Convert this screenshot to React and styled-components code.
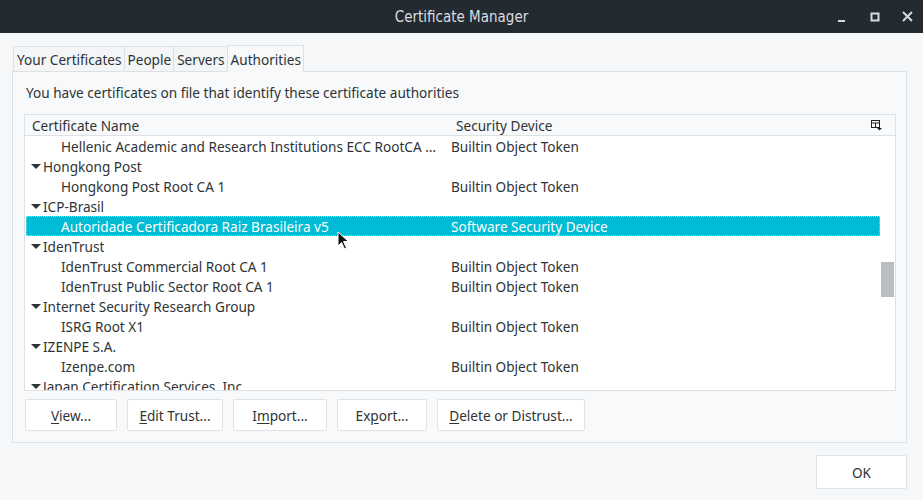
import { createGlobalStyle, styled } from "styled-components";

const Global = createGlobalStyle`
  html, body {
    margin: 0;
    padding: 0;
    width: 923px;
    height: 500px;
    overflow: hidden;
    background: #f5f7f9;
  }
  * { box-sizing: border-box; }
`;

const rows = [
  { child: true, name: "Hellenic Academic and Research Institutions ECC RootCA 2015", device: "Builtin Object Token" },
  { name: "Hongkong Post" },
  { child: true, name: "Hongkong Post Root CA 1", device: "Builtin Object Token" },
  { name: "ICP-Brasil" },
  { child: true, name: "Autoridade Certificadora Raiz Brasileira v5", device: "Software Security Device", selected: true },
  { name: "IdenTrust" },
  { child: true, name: "IdenTrust Commercial Root CA 1", device: "Builtin Object Token" },
  { child: true, name: "IdenTrust Public Sector Root CA 1", device: "Builtin Object Token" },
  { name: "Internet Security Research Group" },
  { child: true, name: "ISRG Root X1", device: "Builtin Object Token" },
  { name: "IZENPE S.A." },
  { child: true, name: "Izenpe.com", device: "Builtin Object Token" },
  { name: "Japan Certification Services, Inc." },
];

const tabs = ["Your Certificates", "People", "Servers", "Authorities"];

export default function App() {
  return (
    <>
      <Global />
      <Window>
        <TitleBar>
          <Title>Certificate Manager</Title>
          <Controls>
            <Ctl>
              <svg width="10" height="10" viewBox="0 0 10 10">
                <rect x="1" y="8" width="7" height="2" fill="#d6dadd" />
              </svg>
            </Ctl>
            <Ctl>
              <svg width="10" height="10" viewBox="0 0 10 10">
                <rect x="1.5" y="1.5" width="7" height="7" fill="none" stroke="#d6dadd" strokeWidth="2" />
              </svg>
            </Ctl>
            <Ctl>
              <svg width="11" height="11" viewBox="0 0 11 11">
                <path d="M1 1 L10 10 M10 1 L1 10" stroke="#d6dadd" strokeWidth="2" />
              </svg>
            </Ctl>
          </Controls>
        </TitleBar>
        <Body>
          <TabRow>
            {tabs.map((t) => (
              <Tab key={t} $active={t === "Authorities"}>
                {t}
              </Tab>
            ))}
          </TabRow>
          <Panel>
            <Intro>You have certificates on file that identify these certificate authorities</Intro>
            <Tree>
              <Header>
                <HeadCell>Certificate Name</HeadCell>
                <HeadCell>Security Device</HeadCell>
                <Picker>
                  <svg width="11" height="11" viewBox="0 0 11 11">
                    <rect x="0.5" y="0.5" width="8" height="7" fill="none" stroke="#222" />
                    <path d="M0.5 3 H8.5 M4.5 3 V7.5" stroke="#222" />
                    <path d="M6 8 H11 L8.5 10.5 Z" fill="#222" />
                  </svg>
                </Picker>
              </Header>
              <TreeBody>
                <RowList>
                  {rows.map((r) => (
                    <Row key={r.name} $selected={r.selected}>
                      <NameCell $child={r.child}>
                        {!r.child && <Twisty />}
                        <Label>{r.name}</Label>
                      </NameCell>
                      <DeviceCell>{r.device}</DeviceCell>
                    </Row>
                  ))}
                </RowList>
                <ScrollTrack>
                  <Thumb />
                </ScrollTrack>
              </TreeBody>
            </Tree>
            <ButtonRow>
              <Btn $w={92}>
                <u>V</u>iew...
              </Btn>
              <Btn $w={96}>
                <u>E</u>dit Trust...
              </Btn>
              <Btn $w={94}>
                I<u>m</u>port...
              </Btn>
              <Btn $w={90}>
                Ex<u>p</u>ort...
              </Btn>
              <Btn $w={148}>
                <u>D</u>elete or Distrust...
              </Btn>
            </ButtonRow>
          </Panel>
          <Footer>
            <Btn $w={91} $h={34}>OK</Btn>
          </Footer>
        </Body>
        <Cursor>
          <svg width="14" height="20" viewBox="0 0 14 20">
            <path d="M1 1 L1 15 L4.5 11.5 L7.5 18 L9.5 17 L6.5 10.5 L11.5 10.5 Z" fill="#111" stroke="#fff" strokeWidth="1" />
          </svg>
        </Cursor>
      </Window>
    </>
  );
}

const Window = styled.div`
  position: relative;
  width: 923px;
  height: 500px;
  display: flex;
  flex-direction: column;
  font-family: "Noto Sans", "Open Sans", sans-serif;
  font-size: 13.6px;
  color: #2e3436;
  background: #f5f7f9;
`;

const TitleBar = styled.div`
  height: 33px;
  flex: none;
  background: #232a30;
  display: flex;
  align-items: center;
  justify-content: center;
  position: relative;
`;

const Title = styled.div`
  font-family: "DejaVu Sans Condensed", "DejaVu Sans", sans-serif;
  font-stretch: condensed;
  font-size: 15px;
  color: #d9dde0;
`;

const Controls = styled.div`
  position: absolute;
  right: 10px;
  top: 0;
  height: 33px;
  display: flex;
  align-items: center;
  gap: 22px;
`;

const Ctl = styled.div`
  width: 11px;
  height: 11px;
  display: flex;
  align-items: center;
  justify-content: center;
`;

const Body = styled.div`
  flex: 1;
  display: flex;
  flex-direction: column;
  padding: 12px 16px 0 12px;
`;

const TabRow = styled.div`
  display: flex;
  align-items: flex-end;
  height: 26px;
  padding-left: 1px;
`;

const Tab = styled.div`
  height: ${(p) => (p.$active ? 27 : 25)}px;
  padding: 0 2px 0 3px;
  display: flex;
  align-items: center;
  border: 1px solid #dde1e4;
  border-bottom: none;
  margin-right: -1px;
  background: ${(p) => (p.$active ? "#f7f9fb" : "#f3f5f7")};
  color: #2e3436;
  margin-bottom: ${(p) => (p.$active ? -1 : 0)}px;
  position: relative;
  z-index: ${(p) => (p.$active ? 1 : 0)};
`;

const Panel = styled.div`
  height: 372px;
  border: 1px solid #dde1e4;
  background: #f7f9fb;
  padding: 11px 10px 0 11px;
  display: flex;
  flex-direction: column;
`;

const Intro = styled.div`
  line-height: 20px;
  padding-left: 2px;
  margin-bottom: 11px;
`;

const Tree = styled.div`
  height: 277px;
  border: 1px solid #dde1e4;
  background: #fff;
  display: flex;
  flex-direction: column;
  overflow: hidden;
`;

const Header = styled.div`
  height: 21px;
  flex: none;
  display: grid;
  grid-template-columns: 424px 1fr 24px;
  align-items: center;
  background: #f7f9fb;
  border-bottom: 1px solid #dde1e4;
`;

const HeadCell = styled.div`
  padding-left: 7px;
  white-space: nowrap;
`;

const Picker = styled.div`
  display: flex;
  align-items: center;
  justify-content: flex-start;
  padding-top: 1px;
`;

const TreeBody = styled.div`
  flex: 1;
  display: flex;
  overflow: hidden;
`;

const RowList = styled.div`
  flex: 1;
  padding-left: 1px;
`;

const Row = styled.div`
  height: 20px;
  display: grid;
  grid-template-columns: 420px 1fr;
  align-items: center;
  background: ${(p) => (p.$selected ? "#00bcd4" : "transparent")};
  color: ${(p) => (p.$selected ? "#fff" : "#2e3436")};
  outline: ${(p) => (p.$selected ? "1px dotted #7fe3ef" : "none")};
  outline-offset: -1px;
`;

const NameCell = styled.div`
  display: flex;
  align-items: center;
  padding-left: ${(p) => (p.$child ? 35 : 5)}px;
  min-width: 0;
  padding-right: 4px;
`;

const Twisty = styled.span`
  width: 0;
  height: 0;
  border-left: 5px solid transparent;
  border-right: 5px solid transparent;
  border-top: 5px solid #2e3436;
  margin-right: 2px;
  flex: none;
`;

const Label = styled.span`
  white-space: nowrap;
  overflow: hidden;
  text-overflow: ellipsis;
`;

const DeviceCell = styled.div`
  white-space: nowrap;
  padding-left: 5px;
`;

const ScrollTrack = styled.div`
  width: 15px;
  flex: none;
  position: relative;
  background: #fff;
`;

const Thumb = styled.div`
  position: absolute;
  left: 1px;
  right: 1px;
  top: 126px;
  height: 35px;
  background: #babdc1;
`;

const ButtonRow = styled.div`
  display: flex;
  gap: 10px;
  margin-top: 8px;
  padding-left: 1px;
`;

const Btn = styled.button`
  width: ${(p) => p.$w}px;
  height: ${(p) => p.$h || 32}px;
  background: #fff;
  border: 1px solid #dfe3e6;
  border-radius: 2px;
  font-family: inherit;
  font-size: 13.6px;
  color: #2e3436;
  padding: 0;
  u {
    text-underline-offset: 2px;
  }
`;

const Footer = styled.div`
  display: flex;
  justify-content: flex-end;
  margin-top: 12px;
`;

const Cursor = styled.div`
  position: absolute;
  left: 337px;
  top: 231px;
  pointer-events: none;
`;
